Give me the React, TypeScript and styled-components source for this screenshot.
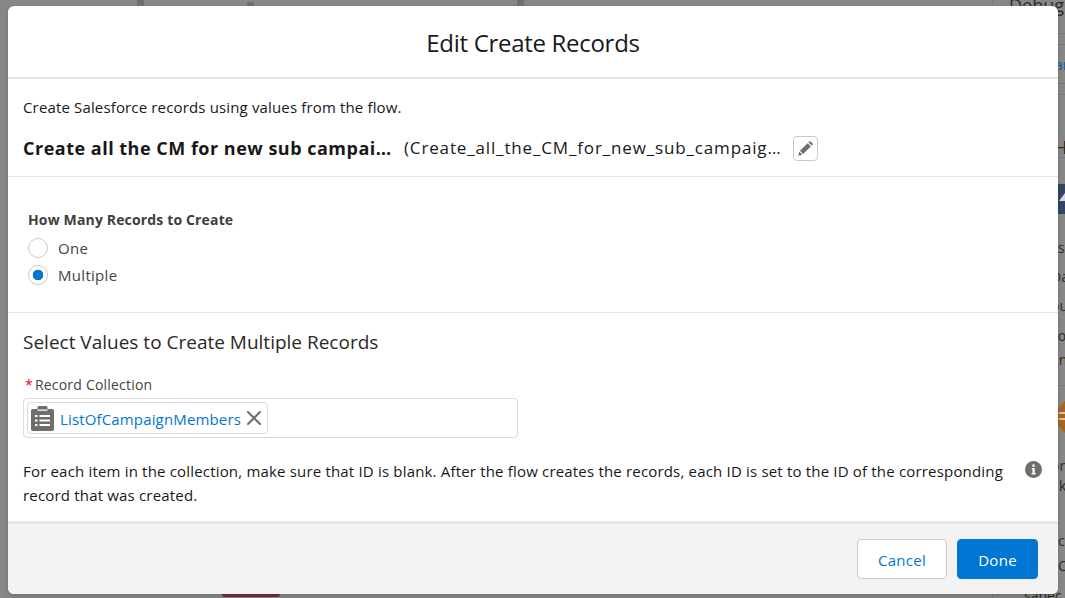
import { createGlobalStyle, styled } from 'styled-components';

const GlobalStyle = createGlobalStyle`
  html, body {
    margin: 0;
    height: 598px;
    overflow: hidden;
    background: #878787;
    font-family: 'Open Sans', 'Noto Sans', Arial, sans-serif;
    color: #181818;
  }
`;

const Page = styled.div`
  position: relative;
  width: 1065px;
  height: 598px;
  padding: 6px 7px 4px 8px;
  box-sizing: border-box;
  overflow: hidden;
`;

// the page behind the dimmed overlay, only its edges show
const BehindPage = styled.div`
  position: absolute;
  inset: 0;
  display: flex;
  justify-content: space-between;
`;

const Columns = styled.div`
  width: 387px;
  margin-left: 137px;
  display: flex;
  justify-content: space-between;
  align-items: flex-start;
`;

const ColumnEdge = styled.div<{ $h: number; $top?: number }>`
  width: 7px;
  height: ${(p) => p.$h}px;
  margin-top: ${(p) => p.$top ?? 0}px;
  background: #6f6f6f;
`;

const ColumnGroup = styled.div`
  width: 277px;
  display: flex;
  justify-content: space-between;
`;

const SideRail = styled.aside`
  width: 72px;
  border-left: 1px solid #777;
  display: flex;
  flex-direction: column;
  overflow: hidden;
`;

const RailRow = styled.div<{ $h: number; $pad?: number; $line?: boolean; $dark?: boolean; $end?: boolean }>`
  height: ${(p) => p.$h}px;
  flex: none;
  box-sizing: border-box;
  display: flex;
  align-items: ${(p) => (p.$end ? 'flex-end' : 'flex-start')};
  padding-left: ${(p) => p.$pad ?? 0}px;
  border-bottom: ${(p) => (p.$line ? '1px solid #777' : 'none')};
  background: ${(p) => (p.$dark ? '#344563' : 'transparent')};
  font-size: 14px;
  line-height: 20px;
  color: #2b2b2b;
  white-space: nowrap;
`;

const RailHeading = styled.span`
  font-size: 18px;
  line-height: 20px;
  margin-top: -5px;
`;

const RailLink = styled.span`
  color: #1a5a96;
  margin-top: 10px;
`;

const BottomTab = styled.div`
  position: absolute;
  left: 222px;
  top: 594px;
  width: 58px;
  height: 3px;
  background: #7a2b45;
  border-radius: 0 0 3px 3px;
`;

const Modal = styled.div`
  position: relative;
  display: flex;
  flex-direction: column;
  height: 100%;
  background: #fff;
  border-radius: 6px;
  box-shadow: 0 2px 4px rgba(0, 0, 0, 0.16);
`;

const Header = styled.header`
  height: 71px;
  flex: none;
  display: flex;
  align-items: center;
  justify-content: center;
  border-bottom: 2px solid #e5e5e5;
`;

const Title = styled.h2`
  margin: 0;
  font-size: 24px;
  font-weight: 400;
  letter-spacing: -0.3px;
  padding-top: 2px;
`;

const Section = styled.section<{ $h: number }>`
  height: ${(p) => p.$h}px;
  flex: none;
  box-sizing: border-box;
  padding: 0 15px;
  border-bottom: 1px solid #e5e5e5;
`;

const Description = styled.p`
  margin: 18px 0 0;
  font-size: 15px;
  letter-spacing: 0.15px;
  line-height: 20px;
`;

const NameRow = styled.div`
  display: flex;
  align-items: center;
  margin-top: 18px;
`;

const Name = styled.div`
  width: 369px;
  font-size: 18px;
  font-weight: 700;
  letter-spacing: 0.5px;
  line-height: 26px;
  overflow: hidden;
  white-space: nowrap;
  text-overflow: ellipsis;
`;

const ApiName = styled.div`
  width: 382px;
  margin-left: 12px;
  font-size: 17px;
  letter-spacing: 0.85px;
  line-height: 24px;
  overflow: hidden;
  white-space: nowrap;
  text-overflow: ellipsis;
`;

const EditButton = styled.button`
  width: 25px;
  height: 25px;
  margin-left: 7px;
  padding: 0;
  display: flex;
  align-items: center;
  justify-content: center;
  background: #fff;
  border: 1px solid #c9c9c9;
  border-radius: 4px;
`;

const Fieldset = styled.div`
  padding: 33px 0 0 5px;
`;

const Legend = styled.div`
  font-size: 14px;
  font-weight: 700;
  letter-spacing: 0.15px;
  line-height: 20px;
  color: #3e3e3c;
  margin-bottom: 8px;
`;

const RadioRow = styled.label`
  display: flex;
  align-items: center;
  gap: 10px;
  height: 20px;
  margin-bottom: 7px;
  font-size: 15px;
  letter-spacing: 0.3px;
  color: #444;
`;

const RadioDot = styled.span<{ $checked?: boolean }>`
  width: 20px;
  height: 20px;
  box-sizing: border-box;
  border: 1px solid #c9c9c9;
  border-radius: 50%;
  background: ${(p) => (p.$checked ? 'radial-gradient(circle, #0176d3 0 5px, #fff 5.6px)' : '#fff')};
`;

const SectionTitle = styled.h3`
  margin: 16px 0 0;
  font-size: 19px;
  font-weight: 400;
  line-height: 26px;
  color: #2b2826;
`;

const FieldLabel = styled.div`
  margin-top: 20px;
  font-size: 14px;
  letter-spacing: 0.2px;
  line-height: 20px;
  color: #444;
  padding-left: 2px;
`;

const Required = styled.abbr`
  color: #ea001e;
  margin-right: 2px;
`;

const Lookup = styled.div`
  width: 495px;
  height: 40px;
  margin-top: 3px;
  box-sizing: border-box;
  padding: 3px;
  border: 1px solid #dddbda;
  border-radius: 4px;
`;

const Pill = styled.div`
  display: inline-flex;
  align-items: center;
  height: 32px;
  box-sizing: border-box;
  padding: 0 5px 0 3px;
  border: 1px solid #dddbda;
  border-radius: 4px;
  font-size: 15px;
  letter-spacing: 0.15px;
  color: #0176d3;
`;

const PillLabel = styled.span`
  margin: 1px 5px 0 6px;
`;

const HelpRow = styled.div`
  display: flex;
  justify-content: space-between;
  margin-top: 21px;
`;

const HelpText = styled.p`
  width: 985px;
  margin: 0;
  font-size: 15px;
  letter-spacing: 0.18px;
  line-height: 24px;
`;

const InfoIcon = styled.svg`
  margin: 2px 1px 0 0;
  flex: none;
`;

const Footer = styled.footer`
  flex: 1;
  display: flex;
  align-items: center;
  justify-content: flex-end;
  gap: 10px;
  padding: 0 20px 0 0;
  background: #f3f3f3;
  border-top: 2px solid #e5e5e5;
  border-radius: 0 0 6px 6px;
`;

const Button = styled.button<{ $brand?: boolean }>`
  height: 40px;
  width: ${(p) => (p.$brand ? 81 : 90)}px;
  padding: 1px 0 0;
  font-family: inherit;
  font-size: 15px;
  letter-spacing: 0.3px;
  border-radius: 4px;
  border: 1px solid ${(p) => (p.$brand ? '#0176d3' : '#c9c9c9')};
  background: ${(p) => (p.$brand ? '#0176d3' : '#fff')};
  color: ${(p) => (p.$brand ? '#fff' : '#0176d3')};
`;

const PencilGlyph = () => (
  <svg width="16" height="16" viewBox="0 0 16 16" fill="#706e6b">
    <path d="M11.900 0.900l3.200 3.200-1.500 1.500-3.200-3.200zM9.600 3.200l3.200 3.200-7.600 7.600-3.200-3.200zM1.200 11.600l3.200 3.200-4.100 0.900z" />
  </svg>
);

const CollectionGlyph = () => (
  <svg width="23" height="25" viewBox="0 0 23 25">
    <path
      fill="#706e6b"
      d="M2 3h4.500V1.500C6.500 .7 7.200 0 8 0h7c.8 0 1.500.7 1.500 1.500V3H21c1.100 0 2 .9 2 2v18c0 1.100-.9 2-2 2H2c-1.100 0-2-.9-2-2V5c0-1.100.9-2 2-2z"
    />
    <path
      fill="#fff"
      d="M4 9h2.500v2H4zM8.500 9H19v2H8.500zM4 13.500h2.500v2H4zM8.500 13.500H19v2H8.500zM4 18h2.500v2H4zM8.500 18H19v2H8.500zM6.500 3.500h10v1.200h-10z"
    />
  </svg>
);

const RemoveGlyph = () => (
  <svg width="16" height="16" viewBox="0 0 16 16" stroke="#706e6b" strokeWidth="2" strokeLinecap="round">
    <path d="M2 2l12 12M14 2L2 14" />
  </svg>
);

export default function App() {
  return (
    <Page>
      <GlobalStyle />
      <BehindPage>
        <Columns>
          <ColumnEdge $h={6} />
          <ColumnGroup>
            <ColumnEdge $h={4} $top={2} />
            <ColumnEdge $h={6} />
          </ColumnGroup>
        </Columns>
        <SideRail>
          <RailRow $h={34} $pad={16} $line>
            <RailHeading>Debug</RailHeading>
          </RailRow>
          <RailRow $h={11} $line />
          <RailRow $h={39} $pad={62} $line>
            <RailLink>ar</RailLink>
          </RailRow>
          <RailRow $h={11} $line />
          <RailRow $h={63} $pad={61} $line $end>
            <RailHeading>H</RailHeading>
          </RailRow>
          <RailRow $h={26} />
          <RailRow $h={30} $pad={65} $dark>
            <svg width="7" height="30" viewBox="0 0 7 30">
              <path fill="#d5d8dd" d="M1 17l6-8v8z" />
            </svg>
          </RailRow>
          <RailRow $h={24} />
          <RailRow $h={29} $pad={60}>ts</RailRow>
          <RailRow $h={29} $pad={58}>Da</RailRow>
          <RailRow $h={30} $pad={58}>ou</RailRow>
          <RailRow $h={24} $pad={59}>ro</RailRow>
          <RailRow $h={36} $pad={58} $line>an</RailRow>
          <RailRow $h={70} $pad={65}>
            <svg width="7" height="47" viewBox="0 0 7 47">
              <path fill="#a9641f" d="M7 15v32l-7-8V23z" />
              <path fill="#d9c4ab" d="M1 26h6v2H1zM1 32h6v2H1z" />
            </svg>
          </RailRow>
          <RailRow $h={20} $pad={58}>or</RailRow>
          <RailRow $h={55} $pad={66}>k</RailRow>
          <RailRow $h={25} $pad={65}>c</RailRow>
          <RailRow $h={30} $pad={65}>C</RailRow>
          <RailRow $h={12} $pad={31}>sabec</RailRow>
        </SideRail>
      </BehindPage>
      <BottomTab />

      <Modal>
        <Header>
          <Title>Edit Create Records</Title>
        </Header>
        <Section $h={98}>
          <Description>Create Salesforce records using values from the flow.</Description>
          <NameRow>
            <Name>Create all the CM for new sub campaign members</Name>
            <ApiName>(Create_all_the_CM_for_new_sub_campaign_members)</ApiName>
            <EditButton aria-label="Edit">
              <PencilGlyph />
            </EditButton>
          </NameRow>
        </Section>
        <Section $h={136}>
          <Fieldset>
            <Legend>How Many Records to Create</Legend>
            <RadioRow>
              <RadioDot />
              One
            </RadioRow>
            <RadioRow>
              <RadioDot $checked />
              Multiple
            </RadioRow>
          </Fieldset>
        </Section>
        <Section $h={209}>
          <SectionTitle>Select Values to Create Multiple Records</SectionTitle>
          <FieldLabel>
            <Required>*</Required>Record Collection
          </FieldLabel>
          <Lookup>
            <Pill>
              <CollectionGlyph />
              <PillLabel>ListOfCampaignMembers</PillLabel>
              <RemoveGlyph />
            </Pill>
          </Lookup>
          <HelpRow>
            <HelpText>
              For each item in the collection, make sure that ID is blank. After the flow creates the records, each ID
              is set to the ID of the corresponding record that was created.
            </HelpText>
            <InfoIcon width="17" height="17" viewBox="0 0 17 17">
              <circle cx="8.500" cy="8.500" r="8.500" fill="#706e6b" />
              <path fill="#fff" d="M7.300 3.500h2.400v2.300H7.300zM6.800 7h2.900v5h1v1.500H6.500V12h1V8.500h-.7z" />
            </InfoIcon>
          </HelpRow>
        </Section>
        <Footer>
          <Button>Cancel</Button>
          <Button $brand>Done</Button>
        </Footer>
      </Modal>
    </Page>
  );
}
